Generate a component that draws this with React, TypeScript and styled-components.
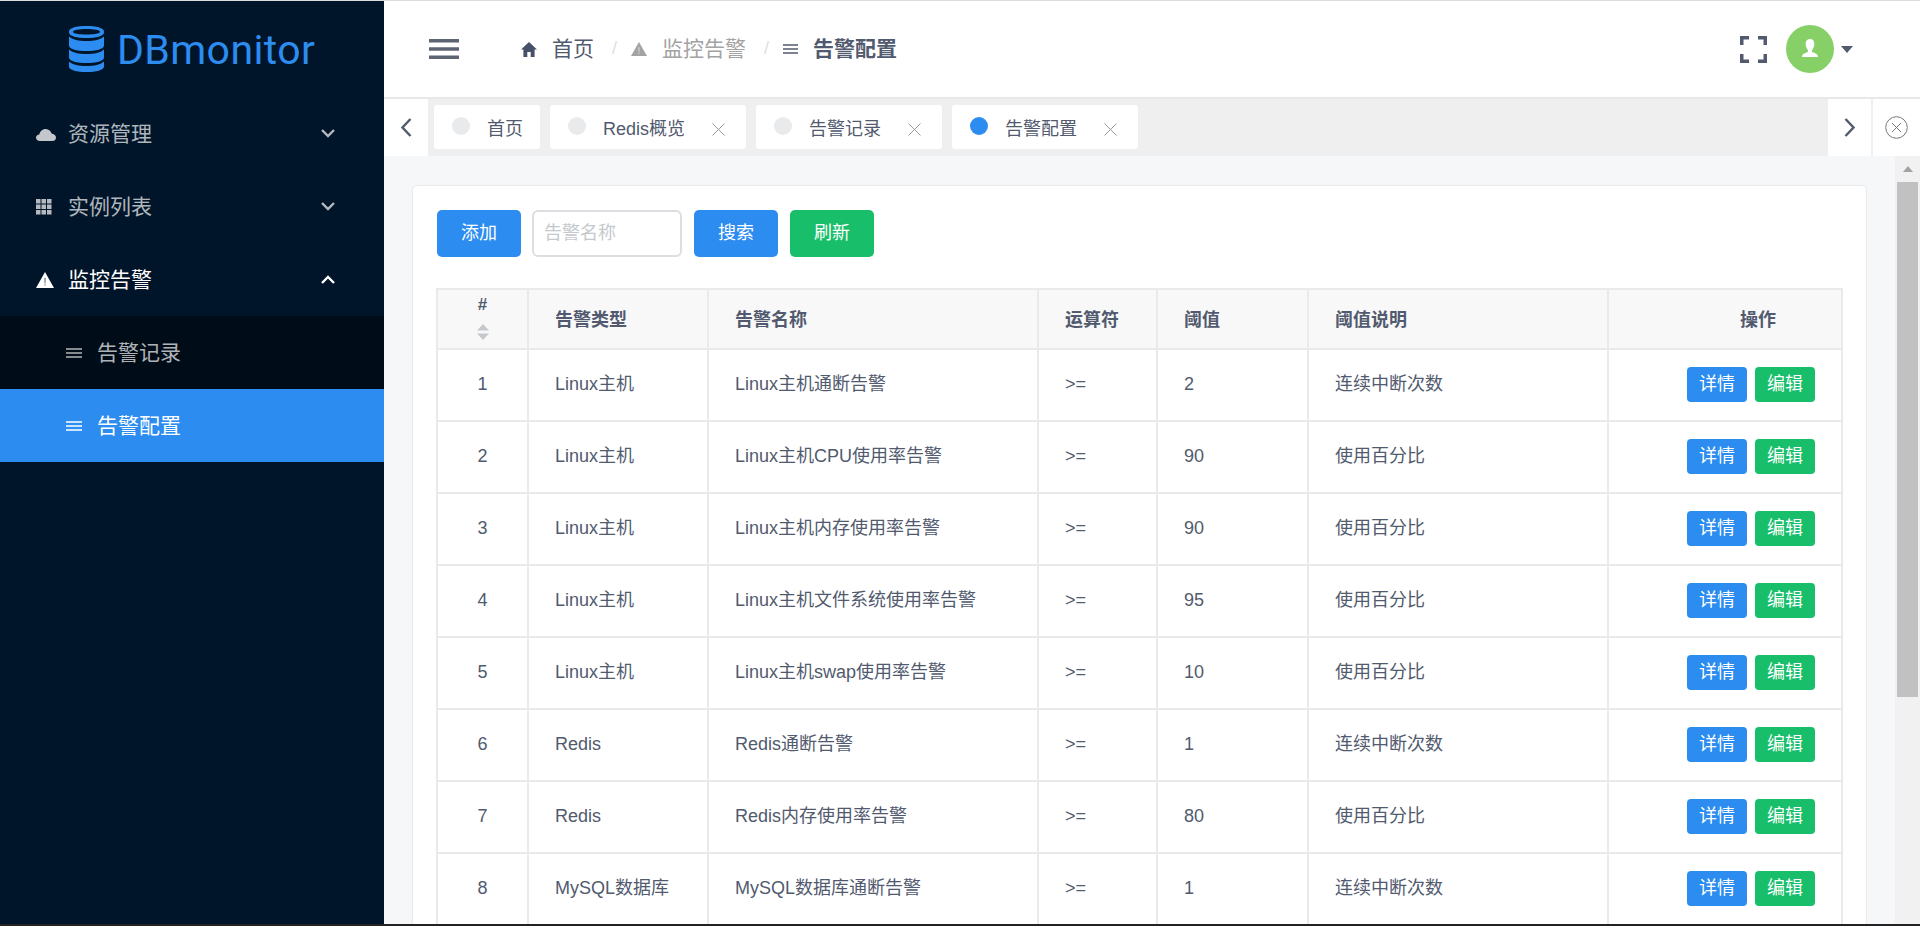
import React from "react";
import styled, { createGlobalStyle } from "styled-components";

const Global = createGlobalStyle`
  html, body { margin: 0; padding: 0; height: 926px; overflow: hidden; background: #fff; }
  * { box-sizing: border-box; }
  body { font-family: "Liberation Sans", "Noto Sans CJK SC", sans-serif; color: #515a6e; line-height: 1.2; }
`;

const Shell = styled.div`
  display: grid;
  grid-template-columns: 384px 1fr;
  height: 926px;
  border-top: 1px solid #dcdcdc;
  border-bottom: 2px solid #222;
  overflow: hidden;
`;

/* ---------- sidebar ---------- */
const Sidebar = styled.aside`
  background: #001529;
  display: flex;
  flex-direction: column;
`;
const Brand = styled.div`
  height: 96px;
  display: flex;
  align-items: center;
  padding-left: 69px;
  gap: 13px;
  color: #2d8cf0;
`;
const BrandName = styled.span`
  font-family: "Roboto", sans-serif;
  font-size: 41px;
  letter-spacing: 0.4px;
  line-height: 1;
  margin-top: 2px;
`;
const NavRow = styled.div<{ $open?: boolean }>`
  height: 73px;
  display: flex;
  align-items: center;
  padding: 0 49px 0 36px;
  font-size: 21px;
  color: ${(p) => (p.$open ? "#fff" : "rgba(255,255,255,.7)")};
`;
const NavIcon = styled.span`
  width: 32px;
  display: flex;
  align-items: center;
`;
const NavLabel = styled.span`
  flex: 1;
`;
const SubNav = styled.div`
  background: #000c17;
`;
const SubRow = styled.div<{ $active?: boolean }>`
  height: 73px;
  display: flex;
  align-items: center;
  gap: 15px;
  padding-left: 66px;
  font-size: 21px;
  color: ${(p) => (p.$active ? "#fff" : "rgba(255,255,255,.7)")};
  background: ${(p) => (p.$active ? "#2d8cf0" : "transparent")};
`;

/* ---------- right side ---------- */
const Right = styled.div`
  display: flex;
  flex-direction: column;
  min-width: 0;
  background: #f5f7f9;
`;
const Header = styled.header`
  height: 96px;
  flex: none;
  background: #fff;
  display: flex;
  align-items: center;
  padding: 0 67px 0 45px;
`;
const Burger = styled.span`
  display: flex;
  margin-right: 62px;
  color: #5d6575;
`;
const Crumbs = styled.nav`
  flex: 1;
  display: flex;
  align-items: center;
  font-size: 21px;
`;
const Crumb = styled.span<{ $tone?: "muted" | "strong" }>`
  display: flex;
  align-items: center;
  gap: 15px;
  color: ${(p) => (p.$tone === "muted" ? "#a3a3a3" : "#515a6e")};
  font-weight: ${(p) => (p.$tone === "strong" ? 700 : 400)};
`;
const Slash = styled.span`
  color: #dcdee2;
  margin: 0 14px 0 18px;
  font-size: 18px;
`;
const HeaderTools = styled.div`
  display: flex;
  align-items: center;
`;
const Avatar = styled.span`
  width: 48px;
  height: 48px;
  border-radius: 50%;
  background: #87d068;
  margin-left: 19px;
  display: flex;
  align-items: center;
  justify-content: center;
`;
const Caret = styled.span`
  width: 0;
  height: 0;
  margin-left: 7px;
  border-left: 6.5px solid transparent;
  border-right: 6.5px solid transparent;
  border-top: 7px solid #515a6e;
`;

const TabBar = styled.div`
  height: 59px;
  flex: none;
  display: flex;
  background: #efefef;
  border-top: 2px solid #e8e8e8;
`;
const TabEdge = styled.button<{ $w: number; $split?: boolean }>`
  width: ${(p) => p.$w}px;
  flex: none;
  border: 0;
  border-left: ${(p) => (p.$split ? "2px solid #efefef" : "0")};
  padding: 0;
  background: #fff;
  color: #515a6e;
  display: flex;
  align-items: center;
  justify-content: center;
`;
const TabStrip = styled.div`
  flex: 1;
  display: flex;
  gap: 10px;
  padding: 6px 6px 0;
`;
const Tab = styled.div`
  height: 44px;
  display: flex;
  align-items: center;
  padding: 5px 17px 0 18px;
  background: #fff;
  border-radius: 3px;
  font-size: 18px;
  color: #515a6e;
`;
const TabDot = styled.span<{ $active?: boolean }>`
  width: 18px;
  height: 18px;
  border-radius: 50%;
  margin: -8px 17px 0 0;
  background: ${(p) => (p.$active ? "#2d8cf0" : "#e8eaec")};
`;
const TabClose = styled.span`
  display: flex;
  margin: 0 4px 0 27px;
  color: #999;
`;

const Workspace = styled.div`
  flex: 1;
  min-height: 0;
  display: flex;
`;
const Main = styled.main`
  flex: 1;
  min-width: 0;
  overflow: hidden;
  padding: 29px 28px 0 28px;
`;
const Card = styled.section`
  background: #fff;
  border: 1px solid #e8eaec;
  border-radius: 5px;
  padding: 24px 24px 0;
  height: 900px;
`;
const Toolbar = styled.div`
  display: flex;
  align-items: center;
  margin-bottom: 31px;
`;
const Button = styled.button<{ $green?: boolean; $gap?: number }>`
  width: 84px;
  height: 47px;
  border: 0;
  border-radius: 5px;
  margin-right: ${(p) => p.$gap ?? 0}px;
  background: ${(p) => (p.$green ? "#19be6b" : "#2d8cf0")};
  color: #fff;
  font: inherit;
  font-size: 18px;
`;
const SearchInput = styled.input`
  width: 150px;
  height: 47px;
  border: 2px solid #dcdee2;
  border-radius: 6px;
  margin-right: 12px;
  padding: 0 10px;
  font: inherit;
  font-size: 18px;
  outline: 0;
  &::placeholder { color: #c5c8ce; opacity: 1; }
`;
const Table = styled.table`
  width: 1405px;
  margin-left: -1px;
  table-layout: fixed;
  border-collapse: collapse;
  font-size: 18px;
`;
const Th = styled.th<{ $center?: boolean; $right?: boolean }>`
  height: 60px;
  padding: 4px ${(p) => (p.$right ? "65px" : "26px")} 0 26px;
  background: #f8f8f9;
  border: 2px solid #e8eaec;
  font-size: 18px;
  font-weight: 700;
  color: #515a6e;
  text-align: ${(p) => (p.$center ? "center" : p.$right ? "right" : "left")};
`;
const HashCell = styled.div`
  display: flex;
  flex-direction: column;
  align-items: center;
  gap: 10px;
  margin-top: -6px;
  line-height: 18px;
  font-size: 17px;
`;
const Td = styled.td<{ $center?: boolean }>`
  height: 72px;
  padding: 0 26px;
  border: 2px solid #e8eaec;
  color: #515a6e;
  text-align: ${(p) => (p.$center ? "center" : "left")};
`;
const Actions = styled.div`
  display: flex;
  justify-content: flex-end;
  gap: 8px;
  margin-top: -2px;
`;
const SmallButton = styled.button<{ $green?: boolean }>`
  width: 60px;
  height: 35px;
  border: 0;
  border-radius: 4px;
  padding: 2px 0 0;
  background: ${(p) => (p.$green ? "#19be6b" : "#2d8cf0")};
  color: #fff;
  font: inherit;
  font-size: 18px;
`;

const ScrollTrack = styled.div`
  width: 25px;
  flex: none;
  background: #f1f1f1;
  display: flex;
  flex-direction: column;
  align-items: center;
`;
const ScrollArrow = styled.span<{ $up?: boolean }>`
  height: 26px;
  flex: none;
  display: flex;
  align-items: center;
  justify-content: center;
  &::after {
    content: "";
    width: 0;
    height: 0;
    border-left: 5px solid transparent;
    border-right: 5px solid transparent;
    ${(p) => (p.$up ? "border-bottom: 6px solid #a3a3a3;" : "border-top: 6px solid #505050;")}
  }
`;
const ScrollThumb = styled.span`
  width: 21px;
  height: 515px;
  flex: none;
  background: #c1c1c1;
`;
const ScrollSpace = styled.span`
  flex: 1;
`;

/* ---------- icons ---------- */
const Cloud = () => (
  <svg width="20" height="14" viewBox="0 0 20 14" fill="#c3c7cc">
    <path d="M4 14C1.6 14 0 12.6 0 10.7 0 8.8 1.5 7.6 3.3 7.4 3.8 4.7 6.2 2 9.7 2c3.2 0 5.4 2.2 6 4.8 2.3.2 4.3 1.6 4.3 3.9 0 2-1.6 3.3-3.8 3.3z" />
  </svg>
);
const Apps = () => (
  <svg width="16" height="16" viewBox="0 0 16 16" fill="#b6babf">
    {[0, 5.5, 11].map((y) =>
      [0, 5.5, 11].map((x) => <rect key={`${x}-${y}`} x={x} y={y} width="4.5" height="4.5" />)
    )}
  </svg>
);
const Warning = ({ size, color, mark }: { size: number; color: string; mark: string }) => (
  <svg width={size} height={size} viewBox="0 0 18 18">
    <path d="M9 1 18 17H0z" fill={color} />
    <path d="M8.6 7h.8l-.1 5.5h-.6zM8.6 13.6h.8v1h-.8z" fill={mark} />
  </svg>
);
const Lines = ({ color, width = 16 }: { color: string; width?: number }) => (
  <svg width={width} height="10" viewBox="0 0 16 10" preserveAspectRatio="none" stroke={color} strokeWidth="1.6">
    <path d="M0 1h16M0 5h16M0 9h16" />
  </svg>
);
const Chevron = ({ up, color }: { up?: boolean; color: string }) => (
  <svg width="14" height="9" viewBox="0 0 14 9" fill="none" stroke={color} strokeWidth="2.4">
    <path d={up ? "M1 8l6-6 6 6" : "M1 1l6 6 6-6"} />
  </svg>
);
const Menu = () => (
  <svg width="30" height="20" viewBox="0 0 30 20" fill="currentColor">
    <rect width="30" height="3.5" />
    <rect y="8.25" width="30" height="3.5" />
    <rect y="16.5" width="30" height="3.5" />
  </svg>
);
const Home = () => (
  <svg width="16" height="15" viewBox="0 0 16 15" fill="#475069">
    <path d="M8 0 0 7.5h2.4V15h3.9v-5h3.4v5h3.9V7.5H16z" />
  </svg>
);
const Fullscreen = () => (
  <svg width="27" height="27" viewBox="0 0 27 27" fill="none" stroke="#515a6e" strokeWidth="3.5">
    <path d="M1.75 9V1.75H9M18 1.75h7.25V9M25.25 18v7.25H18M9 25.25H1.75V18" />
  </svg>
);
const Person = () => (
  <svg width="20" height="22" viewBox="0 0 20 22" fill="#fff">
    <path d="M10 1c3 0 4.3 2.3 4.3 5 0 2.6-1.2 5-2.2 6.2-.5.7-.3 1.6.5 2 2.2 1 5.4 1.5 5.4 4.8H2c0-3.3 3.2-3.8 5.4-4.8.8-.4 1-1.3.5-2C6.9 11 5.7 8.6 5.7 6c0-2.7 1.3-5 4.3-5z" />
  </svg>
);
const Cross = () => (
  <svg width="13" height="13" viewBox="0 0 13 13" stroke="currentColor" strokeWidth="1" fill="none">
    <path d="M.5.5l12 12M12.5.5l-12 12" />
  </svg>
);
const Arrow = ({ right }: { right?: boolean }) => (
  <svg width="11" height="19" viewBox="0 0 11 19" fill="none" stroke="#515a6e" strokeWidth="2.4">
    <path d={right ? "M1.5 1l8 8.5-8 8.5" : "M9.5 1l-8 8.5 8 8.5"} />
  </svg>
);
const CloseAll = () => (
  <svg width="23" height="23" viewBox="0 0 23 23" fill="none" stroke="#777" strokeWidth="1">
    <circle cx="11.5" cy="11.5" r="10.8" />
    <path d="M7 7l9 9M16 7l-9 9" />
  </svg>
);
const Database = () => (
  <svg width="35" height="46" viewBox="0 0 35 46" fill="#2d8cf0">
    <path d="M17.5 0C8 0 0 1.8 0 5.5v1C0 10.2 8 12 17.5 12S35 10.2 35 6.5v-1C35 1.8 27 0 17.5 0zm0 3C25 3 31 4 31 5.8S25 8.6 17.5 8.6 4 7.6 4 5.8 10 3 17.5 3z" />
    <path d="M0 10.5C3 13.6 10 15 17.5 15S32 13.6 35 10.5v9C35 23.2 27 25 17.5 25S0 23.2 0 19.5z" />
    <path d="M0 23.5C3 26.6 10 28 17.5 28S32 26.6 35 23.5v8C35 35.2 27 37 17.5 37S0 35.2 0 31.5z" />
    <path d="M0 35.5C3 38.6 10 40 17.5 40S32 38.6 35 35.5v5C35 44.2 27 46 17.5 46S0 44.2 0 40.5z" />
  </svg>
);
const Sort = () => (
  <svg width="12" height="16" viewBox="0 0 12 16" fill="#c5c8ce">
    <path d="M6 0l6 6.5H0zM6 16l6-6.5H0z" />
  </svg>
);

const rows: [string, string, string, string, string][] = [
  ["Linux主机", "Linux主机通断告警", ">=", "2", "连续中断次数"],
  ["Linux主机", "Linux主机CPU使用率告警", ">=", "90", "使用百分比"],
  ["Linux主机", "Linux主机内存使用率告警", ">=", "90", "使用百分比"],
  ["Linux主机", "Linux主机文件系统使用率告警", ">=", "95", "使用百分比"],
  ["Linux主机", "Linux主机swap使用率告警", ">=", "10", "使用百分比"],
  ["Redis", "Redis通断告警", ">=", "1", "连续中断次数"],
  ["Redis", "Redis内存使用率告警", ">=", "80", "使用百分比"],
  ["MySQL数据库", "MySQL数据库通断告警", ">=", "1", "连续中断次数"],
];
const colWidths = [91, 180, 330, 119, 151, 300, 234];
const tabs = [
  { label: "首页", closable: false },
  { label: "Redis概览", closable: true },
  { label: "告警记录", closable: true },
  { label: "告警配置", closable: true, active: true },
];

export default function App() {
  return (
    <>
      <Global />
      <Shell>
        <Sidebar>
          <Brand>
            <Database />
            <BrandName>DBmonitor</BrandName>
          </Brand>
          <NavRow>
            <NavIcon><Cloud /></NavIcon>
            <NavLabel>资源管理</NavLabel>
            <Chevron color="rgba(255,255,255,.7)" />
          </NavRow>
          <NavRow>
            <NavIcon><Apps /></NavIcon>
            <NavLabel>实例列表</NavLabel>
            <Chevron color="rgba(255,255,255,.7)" />
          </NavRow>
          <NavRow $open>
            <NavIcon><Warning size={18} color="#fff" mark="#001529" /></NavIcon>
            <NavLabel>监控告警</NavLabel>
            <Chevron up color="#fff" />
          </NavRow>
          <SubNav>
            <SubRow><Lines color="rgba(255,255,255,.7)" />告警记录</SubRow>
            <SubRow $active><Lines color="#fff" />告警配置</SubRow>
          </SubNav>
        </Sidebar>
        <Right>
          <Header>
            <Burger><Menu /></Burger>
            <Crumbs>
              <Crumb><Home />首页</Crumb>
              <Slash>/</Slash>
              <Crumb $tone="muted"><Warning size={16} color="#a3a3a3" mark="#fff" />监控告警</Crumb>
              <Slash>/</Slash>
              <Crumb $tone="strong"><Lines color="#515a6e" width={15} />告警配置</Crumb>
            </Crumbs>
            <HeaderTools>
              <Fullscreen />
              <Avatar><Person /></Avatar>
              <Caret />
            </HeaderTools>
          </Header>
          <TabBar>
            <TabEdge $w={44}><Arrow /></TabEdge>
            <TabStrip>
              {tabs.map((t) => (
                <Tab key={t.label}>
                  <TabDot $active={t.active} />
                  {t.label}
                  {t.closable && <TabClose><Cross /></TabClose>}
                </Tab>
              ))}
            </TabStrip>
            <TabEdge $w={43}><Arrow right /></TabEdge>
            <TabEdge $w={49} $split><CloseAll /></TabEdge>
          </TabBar>
          <Workspace>
            <Main>
              <Card>
                <Toolbar>
                  <Button $gap={11}>添加</Button>
                  <SearchInput placeholder="告警名称" />
                  <Button $gap={12}>搜索</Button>
                  <Button $green>刷新</Button>
                </Toolbar>
                <Table>
                  <colgroup>
                    {colWidths.map((w, i) => <col key={i} style={{ width: w }} />)}
                  </colgroup>
                  <thead>
                    <tr>
                      <Th $center><HashCell>#<Sort /></HashCell></Th>
                      <Th>告警类型</Th>
                      <Th>告警名称</Th>
                      <Th>运算符</Th>
                      <Th>阈值</Th>
                      <Th>阈值说明</Th>
                      <Th $right>操作</Th>
                    </tr>
                  </thead>
                  <tbody>
                    {rows.map((r, i) => (
                      <tr key={i}>
                        <Td $center>{i + 1}</Td>
                        {r.map((c, j) => <Td key={j}>{c}</Td>)}
                        <Td>
                          <Actions>
                            <SmallButton>详情</SmallButton>
                            <SmallButton $green>编辑</SmallButton>
                          </Actions>
                        </Td>
                      </tr>
                    ))}
                  </tbody>
                </Table>
              </Card>
            </Main>
            <ScrollTrack>
              <ScrollArrow $up />
              <ScrollThumb />
              <ScrollSpace />
              <ScrollArrow />
            </ScrollTrack>
          </Workspace>
        </Right>
      </Shell>
    </>
  );
}
